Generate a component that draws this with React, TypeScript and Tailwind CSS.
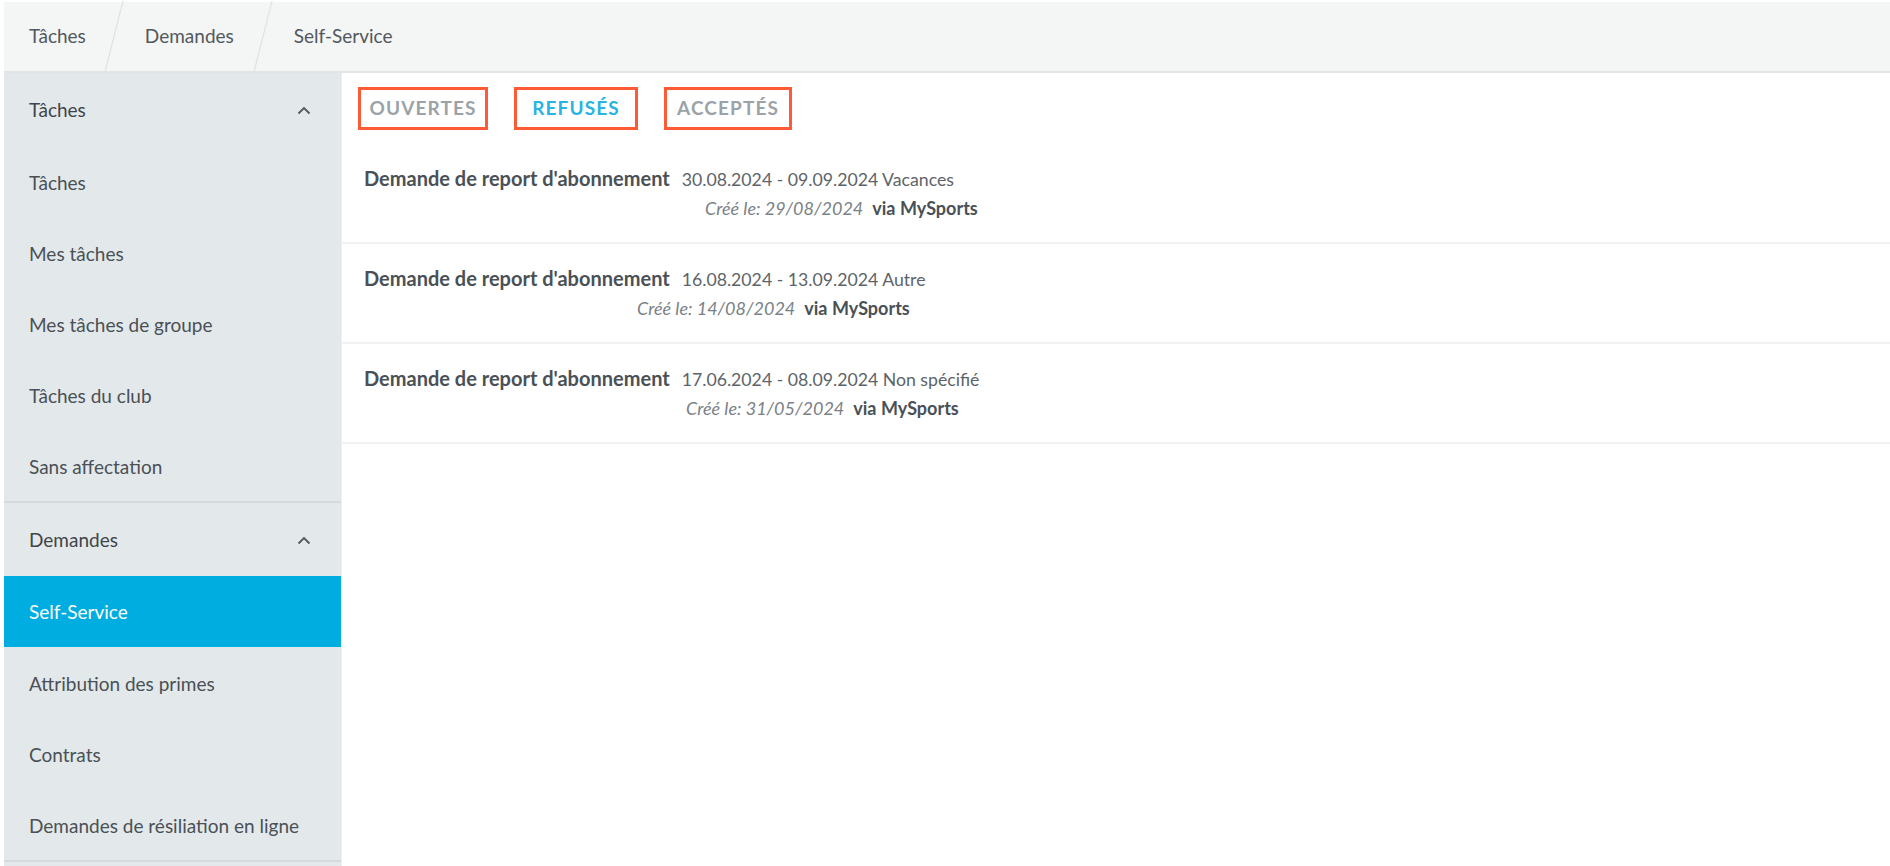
import React from "react";

type Request = {
  period: string;
  reason: string;
  created: string;
  indent: string;
};

const requests: Request[] = [
  { period: "30.08.2024 - 09.09.2024", reason: "Vacances", created: "29/08/2024", indent: "pl-[341px]" },
  { period: "16.08.2024 - 13.09.2024", reason: "Autre", created: "14/08/2024", indent: "pl-[273px]" },
  { period: "17.06.2024 - 08.09.2024", reason: "Non spécifié", created: "31/05/2024", indent: "pl-[322px]" },
];

const taskItems = ["Tâches", "Mes tâches", "Mes tâches de groupe", "Tâches du club", "Sans affectation"];
const requestItems = ["Self-Service", "Attribution des primes", "Contrats", "Demandes de résiliation en ligne"];

function Slash() {
  return (
    <svg width="20" height="71" viewBox="0 0 20 71" className="shrink-0">
      <line x1="19" y1="0" x2="1" y2="71" stroke="#dfe2e4" strokeWidth="1.2" />
    </svg>
  );
}

function Caret() {
  return (
    <svg width="14" height="9" viewBox="0 0 14 9" className="shrink-0">
      <polyline points="1.5,7.5 7,2 12.5,7.5" fill="none" stroke="#50575c" strokeWidth="1.8" />
    </svg>
  );
}

function GroupHeader({ label }: { label: string }) {
  return (
    <div className="flex h-[73px] items-center justify-between pl-[25px] pr-[30px] pt-[2px] text-[#3f4549]">
      <span>{label}</span>
      <Caret />
    </div>
  );
}

function NavItem({ label, active }: { label: string; active?: boolean }) {
  return (
    <div
      className={
        active
          ? "flex h-[71px] items-center bg-[#00ade0] pl-[25px] pt-[2px] text-white"
          : "flex h-[71px] items-center pl-[25px] pt-[3px] text-[#4a5055]"
      }
    >
      {label}
    </div>
  );
}

export default function App() {
  return (
    <div
      className="flex h-[866px] w-full flex-col overflow-hidden bg-white pl-[4px] pt-[2px] text-[19px]"
      style={{ fontFamily: "Lato, 'Open Sans', sans-serif" }}
    >
      {/* breadcrumb */}
      <div className="flex h-[71px] shrink-0 items-center border-b-2 border-[#e2e5e7] bg-[#f4f5f5] text-[#52585d]">
        <span className="pl-[25px] pr-[18px]">Tâches</span>
        <Slash />
        <span className="pl-[21px] pr-[19px]">Demandes</span>
        <Slash />
        <span className="pl-[21px]">Self-Service</span>
      </div>

      <div className="flex min-h-0 flex-1">
        {/* sidebar */}
        <aside className="w-[337px] shrink-0 bg-[#e3e8eb]">
          <GroupHeader label="Tâches" />
          {taskItems.map((item) => (
            <NavItem key={item} label={item} />
          ))}
          <div className="h-[2px] bg-[#d4dadd]" />
          <GroupHeader label="Demandes" />
          {requestItems.map((item, i) => (
            <NavItem key={item} label={item} active={i === 0} />
          ))}
          <div className="h-[2px] bg-[#d4dadd]" />
        </aside>

        {/* content */}
        <main className="flex-1 border-l border-[#eceef0]">
          <div className="flex gap-[26px] pl-[16px] pt-[14px] font-bold uppercase tracking-[1.1px]">
            <div className="flex h-[43px] w-[130px] items-center justify-center border-[3px] border-[#ff5a36] text-[#9ba3a8]">
              Ouvertes
            </div>
            <div className="flex h-[43px] w-[124px] items-center justify-center border-[3px] border-[#ff5a36] text-[#28b4e2]">
              Refusés
            </div>
            <div className="flex h-[43px] w-[128px] items-center justify-center border-[3px] border-[#ff5a36] text-[#9ba3a8]">
              Acceptés
            </div>
          </div>

          <div className="mt-[14px]">
            {requests.map((r) => (
              <div key={r.created} className="h-[100px] border-b-2 border-[#f0f2f3] pl-[22px] pt-[20px] leading-[28px]">
                <div className="flex items-baseline">
                  <span className="text-[20px] font-bold text-[#4a5156]">Demande de report d'abonnement</span>
                  <span className="pl-[12px] text-[17.7px] text-[#5d6469]">
                    {r.period} {r.reason}
                  </span>
                </div>
                <div className={r.indent + " text-[18px]"}>
                  <span className="italic text-[#7a8186]">Créé le: {r.created}</span>
                  <span className="pl-[9px] font-bold text-[#4a5156]">via MySports</span>
                </div>
              </div>
            ))}
          </div>
        </main>
      </div>
    </div>
  );
}
